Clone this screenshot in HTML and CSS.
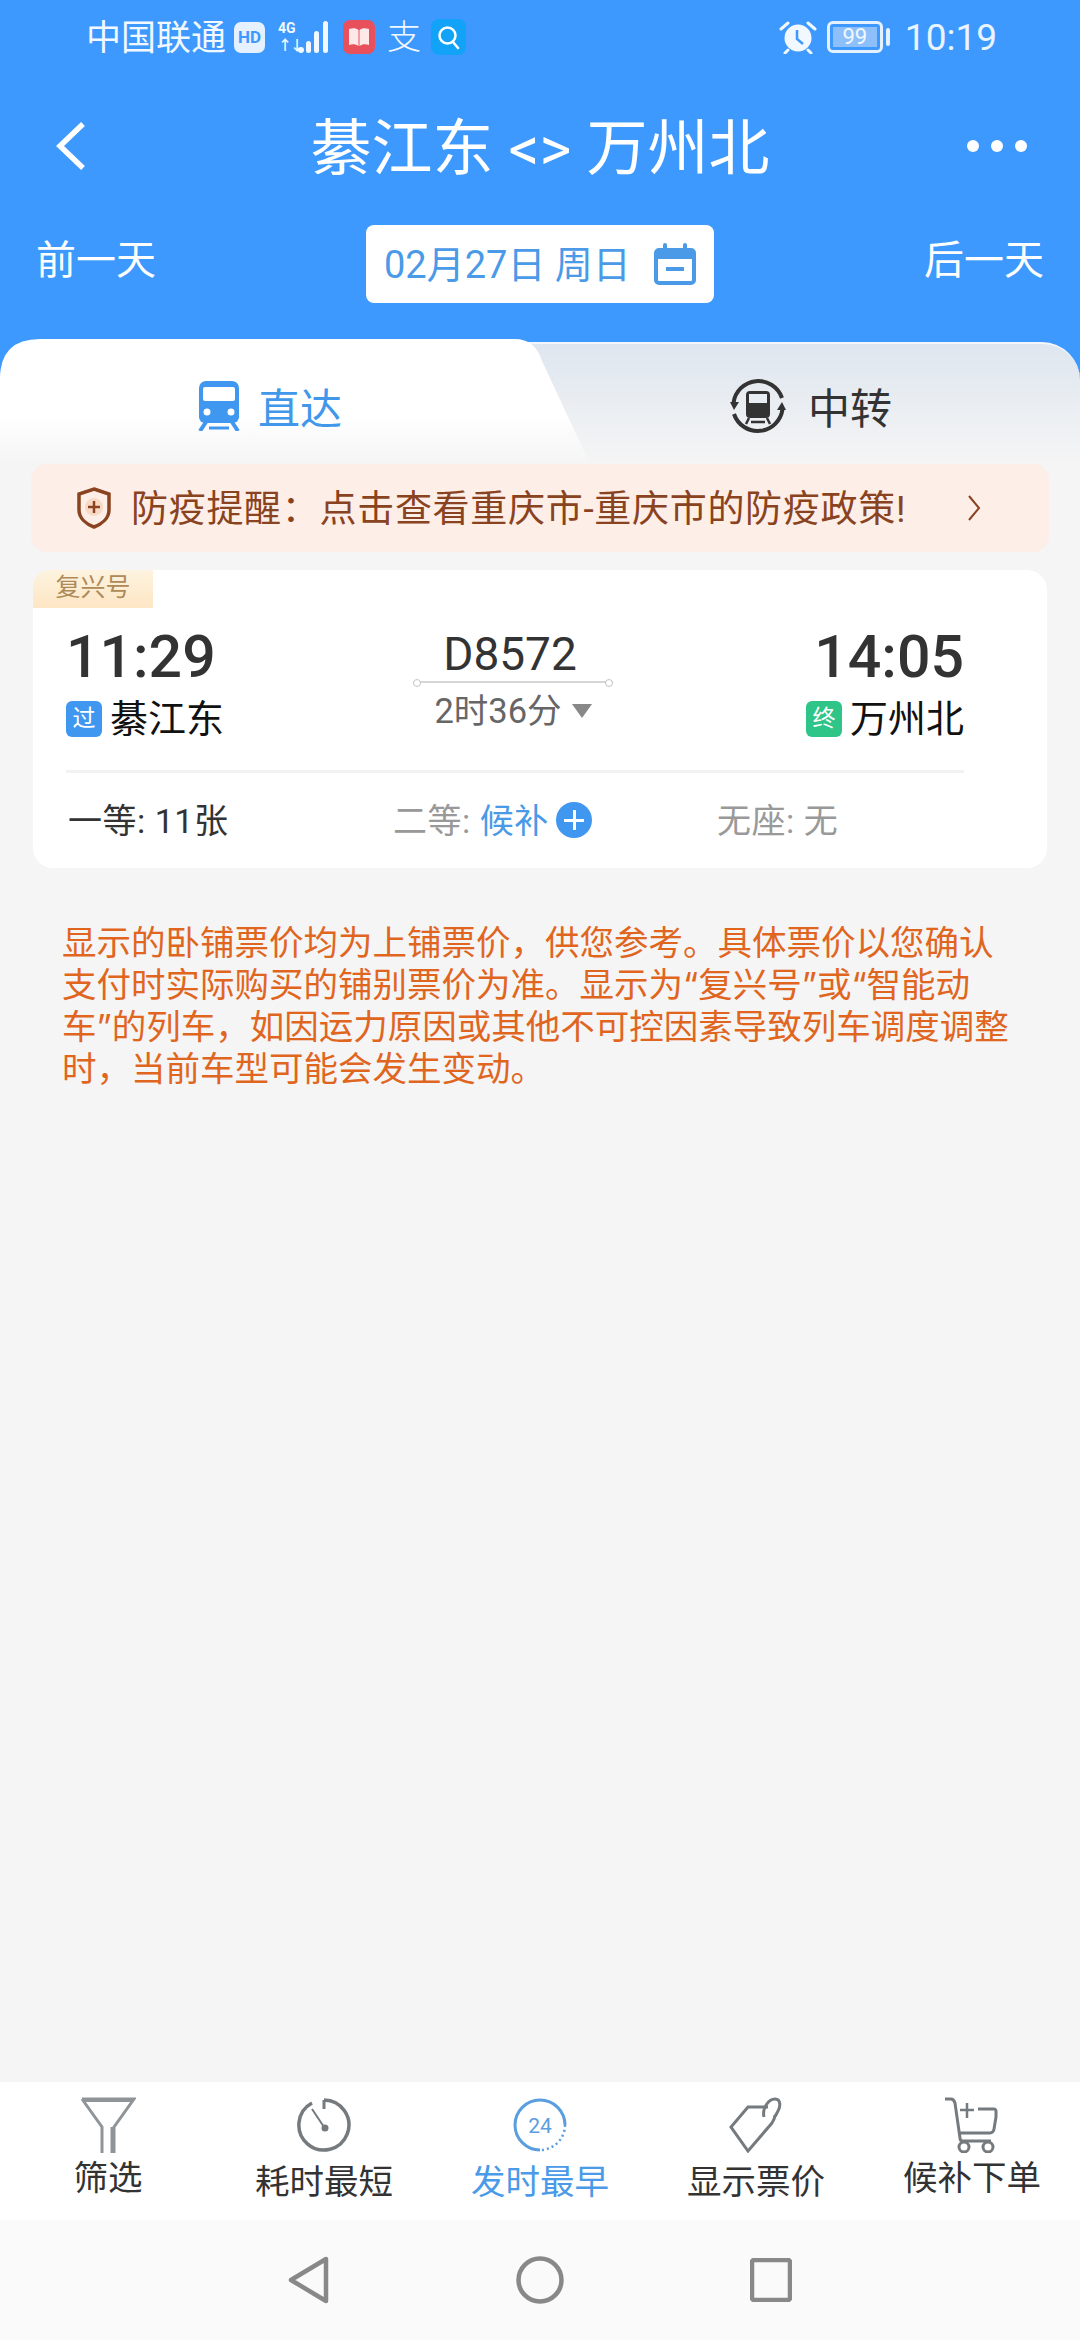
FILE: index.html
```html
<!DOCTYPE html>
<html lang="zh-CN">
<head>
    <meta charset="UTF-8">
    <meta name="viewport" content="width=device-width, initial-scale=1.0">
    <title>綦江东 &lt;&gt; 万州北</title>
    <link rel="stylesheet" href="styles.css">
</head>
<body>
    <div id="page">
        <header class="top">
            <div class="status-bar">
                <div class="status-left">
                    <span class="carrier">中国联通</span>
                    <span class="hd">HD</span>
                    <span class="net">
                        <span class="net-labels"><b>4G</b><b>↑↓</b></span>
                        <svg width="32" height="34" viewBox="0 0 32 34"><g fill="#f2f8ff"><circle cx="3" cy="30" r="3"/><rect x="8" y="21" width="5" height="12" rx="2.500"/><rect x="16" y="11" width="5" height="22" rx="2.500"/><rect x="25" y="1" width="5" height="32" rx="2.500"/></g></svg>
                    </span>
                    <svg class="app-book" width="32" height="34" viewBox="0 0 32 34"><rect width="32" height="34" rx="7" fill="#e8505b"/><path d="M6 9c4-1 7-1 9.500 1v16c-3-2-6-2-9.500-1zM26 9c-4-1-7-1-9.500 1v16c3-2 6-2 9.500-1z" fill="#fde8ea"/></svg>
                    <span class="app-zhi">支</span>
                    <svg class="app-search" width="35" height="36" viewBox="0 0 35 36"><rect width="35" height="36" rx="8" fill="#12a3f8"/><circle cx="16.500" cy="16.500" r="8" fill="none" stroke="#fff" stroke-width="2.500"/><path d="M22 23l5 6" stroke="#fff" stroke-width="2.500" stroke-linecap="round"/></svg>
                </div>
                <div class="status-right">
                    <svg width="38" height="34" viewBox="0 0 38 34"><circle cx="19" cy="18" r="13.500" fill="#f2f8ff"/><path d="M18 10v9l6 5" fill="none" stroke="#3d99fd" stroke-width="2.500"/><path d="M2 9l7-6M36 9l-7-6M9 30l-3 3M29 30l3 3" stroke="#f2f8ff" stroke-width="3" stroke-linecap="round"/></svg>
                    <span class="battery"><span class="battery-level">99</span></span>
                    <span class="battery-tip"></span>
                    <span class="clock">10:19</span>
                </div>
            </div>

            <div class="title-row">
                <svg class="back" width="34" height="50" viewBox="0 0 34 50"><path d="M29 3L6 25l23 22" fill="none" stroke="#fff" stroke-width="5.500"/></svg>
                <h1>綦江东 &lt;&gt; 万州北</h1>
                <div class="more"><i></i><i></i><i></i></div>
            </div>

            <div class="date-row">
                <span class="day-link">前一天</span>
                <div class="date-pill">
                    <span class="date-text">02月27日 周日</span>
                    <svg width="42" height="42" viewBox="0 0 42 42"><rect x="2" y="7" width="38" height="33" rx="3" fill="none" stroke="#4a9ae8" stroke-width="4"/><rect x="2" y="7" width="38" height="9" fill="#4a9ae8"/><path d="M11 2v9M31 2v9" stroke="#4a9ae8" stroke-width="4" stroke-linecap="round"/><rect x="12" y="24" width="18" height="4" fill="#4a9ae8"/></svg>
                </div>
                <span class="day-link">后一天</span>
            </div>

            <div class="tabs">
                <div class="tab-back"></div>
                <div class="tab tab-active">
                    <svg width="42" height="50" viewBox="0 0 42 50"><path d="M8 0h26a7 7 0 0 1 7 7v29a6 6 0 0 1-6 6H7a6 6 0 0 1-6-6V7a7 7 0 0 1 7-7z" fill="#3f97f0"/><rect x="5" y="6" width="32" height="14" rx="2" fill="#fff"/><circle cx="9" cy="31" r="3.500" fill="#fff"/><circle cx="33" cy="31" r="3.500" fill="#fff"/><path d="M8 41L2 50M34 41l6 9" stroke="#3f97f0" stroke-width="4"/><path d="M11 47h20" stroke="#3f97f0" stroke-width="3"/></svg>
                    <span>直达</span>
                </div>
                <div class="tab tab-other">
                    <svg width="56" height="56" viewBox="0 0 56 56"><path d="M3.500 25A25 25 0 0 1 52 20M52.500 31A25 25 0 0 1 4 36" fill="none" stroke="#333" stroke-width="4"/><path d="M0 24l9 0-5 8zM56 32l-9 0 5-8z" fill="#333"/><rect x="16" y="13" width="24" height="27" rx="4" fill="#333"/><rect x="19" y="16" width="18" height="9" fill="#e8edf3"/><path d="M19 40l-3 6M37 40l3 6M21 44h14" stroke="#333" stroke-width="2.500"/></svg>
                    <span>中转</span>
                </div>
            </div>
        </header>

        <main class="content">
            <div class="notice">
                <svg width="34" height="42" viewBox="0 0 34 42"><path d="M17 2l15 5v16c0 8-7 14-15 17C9 37 2 31 2 23V7z" fill="#fdeee7" stroke="#8a4320" stroke-width="3.500"/><circle cx="17" cy="20" r="9" fill="#f8d9c4"/><path d="M17 14v12M11 20h12" stroke="#8a4320" stroke-width="2.500"/></svg>
                <span class="notice-text">防疫提醒：点击查看重庆市-重庆市的防疫政策!</span>
                <svg class="notice-arrow" width="14" height="26" viewBox="0 0 14 26"><path d="M2 1l10 12L2 25" fill="none" stroke="#8a4320" stroke-width="2"/></svg>
            </div>

            <section class="train-card">
                <span class="train-badge">复兴号</span>
                <div class="route">
                    <div class="stop">
                        <div class="time">11:29</div>
                        <div class="station"><span class="tag tag-pass">过</span><span>綦江东</span></div>
                    </div>
                    <div class="middle">
                        <div class="train-no">D8572</div>
                        <div class="track"></div>
                        <div class="duration">2时36分<i class="caret"></i></div>
                    </div>
                    <div class="stop stop-end">
                        <div class="time">14:05</div>
                        <div class="station"><span class="tag tag-end">终</span><span>万州北</span></div>
                    </div>
                </div>
                <div class="seats">
                    <span class="seat seat-first">一等: 11张</span>
                    <span class="seat seat-second">二等: <em>候补</em><i class="plus"></i></span>
                    <span class="seat seat-none">无座: 无</span>
                </div>
            </section>

            <p class="tip">显示的卧铺票价均为上铺票价，供您参考。具体票价以您确认支付时实际购买的铺别票价为准。显示为“复兴号”或“智能动车”的列车，如因运力原因或其他不可控因素导致列车调度调整时，当前车型可能会发生变动。</p>
        </main>

        <nav class="toolbar">
            <div class="tool tool-high">
                <svg width="56" height="56" viewBox="0 0 56 56"><path d="M2 2h52L34 30v26h-2V30M22 56V30L2 2" fill="none" stroke="#8f9498" stroke-width="3"/><path d="M4 3h48" stroke="#8f9498" stroke-width="4"/></svg>
                <span>筛选</span>
            </div>
            <div class="tool">
                <svg width="56" height="56" viewBox="0 0 56 56"><path d="M28 3a25 25 0 1 1-12 3" fill="none" stroke="#757a7e" stroke-width="3.500"/><path d="M16 12l12 18" stroke="#757a7e" stroke-width="2"/><circle cx="29" cy="31" r="3.500" fill="#757a7e"/><path d="M28 3v9" stroke="#757a7e" stroke-width="3"/></svg>
                <span>耗时最短</span>
            </div>
            <div class="tool tool-on">
                <svg width="56" height="56" viewBox="0 0 56 56"><path d="M53 28A25 25 0 1 0 28 53" fill="none" stroke="#5a9ee0" stroke-width="3"/><path d="M53 28a25 25 0 0 1-25 25" fill="none" stroke="#5a9ee0" stroke-width="2.500" stroke-dasharray="2 3"/><text x="28" y="36" text-anchor="middle" font-size="21" font-family="Roboto, sans-serif" fill="#5a9ee0">24</text></svg>
                <span>发时最早</span>
            </div>
            <div class="tool">
                <svg width="56" height="56" viewBox="0 0 56 56"><path d="M40 10H20L3 30l17 24 24-28c2-3 3-5 3-8" fill="none" stroke="#757a7e" stroke-width="3"/><path d="M36 20c-2-8 4-18 11-18 6 0 6 8 2 14-1 2-2 3-2 4" fill="none" stroke="#757a7e" stroke-width="3"/></svg>
                <span>显示票价</span>
            </div>
            <div class="tool tool-high">
                <svg width="56" height="56" viewBox="0 0 56 56"><path d="M1 2h6c2 0 3 1 4 4l5 35c0 2 1 3 3 3h28M14 36h32c2 0 4-2 4-4l2-12V14c0-1-1-2-2-2H34" fill="none" stroke="#757a7e" stroke-width="3"/><path d="M23 6v15M16 13h14" stroke="#757a7e" stroke-width="2.500"/><circle cx="20" cy="50" r="5" fill="none" stroke="#757a7e" stroke-width="3"/><circle cx="44" cy="50" r="5" fill="none" stroke="#757a7e" stroke-width="3"/></svg>
                <span>候补下单</span>
            </div>
        </nav>

        <div class="nav-keys">
            <svg width="42" height="48" viewBox="0 0 42 48"><path d="M38 3v42L3 24z" fill="none" stroke="#888" stroke-width="4.500" stroke-linejoin="round"/></svg>
            <svg width="48" height="48" viewBox="0 0 48 48"><circle cx="24" cy="24" r="21.500" fill="none" stroke="#888" stroke-width="4.500"/></svg>
            <svg width="42" height="44" viewBox="0 0 42 44"><rect x="2" y="2" width="38" height="40" rx="2" fill="none" stroke="#888" stroke-width="4.500"/></svg>
        </div>
    </div>
</body>
</html>
```
FILE: styles.css
```css
* {
    box-sizing: border-box;
}
body {
    margin: 0;
    background-color: #f5f5f5;
    font-family: Roboto, "Noto Sans CJK SC", sans-serif;
    color: #333;
}
#page {
    width: 1080px;
    height: 2340px;
    display: flex;
    flex-direction: column;
}

/* 顶部蓝色区域 */
.top {
    background-color: #3d99fd;
    color: #fff;
    height: 464px;
    flex: none;
}
.status-bar {
    height: 74px;
    padding: 0 83px 0 86px;
    display: flex;
    justify-content: space-between;
    align-items: center;
}
.status-left, .status-right {
    display: flex;
    align-items: center;
}
.carrier {
    font-size: 35px;
    color: #f2f8ff;
    padding-bottom: 5px;
}
.hd {
    margin-left: 8px;
    width: 31px;
    height: 31px;
    border-radius: 7px;
    background-color: #e6f1ff;
    color: #3d99fd;
    font-size: 17px;
    font-weight: 700;
    line-height: 31px;
    text-align: center;
}
.net {
    margin-left: 13px;
    display: flex;
    align-items: flex-end;
}
.net-labels {
    width: 20px;
    display: flex;
    flex-direction: column;
    font-size: 14px;
    line-height: 17px;
    color: #f2f8ff;
    white-space: nowrap;
}
.net-labels b:last-child {
    letter-spacing: -2px;
}
.app-book {
    margin-left: 13px;
}
.app-zhi {
    margin-left: 12px;
    width: 35px;
    font-size: 34px;
    line-height: 40px;
    font-weight: 300;
    color: #f2f8ff;
}
.app-search {
    margin-left: 9px;
}
.battery {
    margin-left: 10px;
    width: 56px;
    height: 32px;
    border: 3px solid #e6f1ff;
    border-radius: 6px;
    padding: 3px;
    display: flex;
}
.battery-level {
    flex: 1;
    background-color: #8dc0fb;
    color: #f2f8ff;
    font-size: 22px;
    line-height: 20px;
    text-align: center;
}
.battery-tip {
    margin-left: 3px;
    width: 4px;
    height: 18px;
    border-radius: 2px;
    background-color: #e6f1ff;
}
.clock {
    margin-left: 15px;
    font-size: 37px;
    color: #eaf4ff;
}
.title-row {
    height: 144px;
    padding: 0 53px 0 54px;
    display: flex;
    justify-content: space-between;
    align-items: center;
    position: relative;
}
.title-row h1 {
    margin: 0;
    padding-bottom: 6px;
    font-size: 61px;
    font-weight: 400;
    position: absolute;
    left: 0;
    right: 0;
    text-align: center;
    pointer-events: none;
}
.more {
    display: flex;
    gap: 12px;
}
.more i {
    width: 12px;
    height: 12px;
    border-radius: 50%;
    background-color: #fff;
}
.date-row {
    height: 84px;
    margin-top: 4px;
    padding: 0 36px;
    display: flex;
    justify-content: space-between;
    align-items: center;
    position: relative;
}
.day-link {
    font-size: 40px;
    padding-bottom: 14px;
}
.date-pill {
    position: absolute;
    left: 366px;
    top: 3px;
    width: 348px;
    height: 78px;
    padding: 0 18px;
    border-radius: 8px;
    background-color: #fff;
    color: #4a9ae8;
    font-size: 38px;
    display: flex;
    justify-content: space-between;
    align-items: center;
}
.date-text {
    padding-bottom: 5px;
}

/* 直达 / 中转 */
.tabs {
    margin-top: 33px;
    height: 125px;
    display: flex;
    position: relative;
}
.tab {
    display: flex;
    align-items: center;
    font-size: 42px;
    padding-top: 8px;
}
.tab-back {
    position: absolute;
    left: 0;
    right: 0;
    top: 3px;
    bottom: 0;
    border-top: 2px solid #f3f6fa;
    border-radius: 38px 38px 0 0;
    background: linear-gradient(#dee6ef, #f5f5f5);
}
.tab-active {
    position: relative;
    width: 590px;
    padding-left: 198px;
    gap: 18px;
    color: #4197ea;
    background: linear-gradient(#fff 60%, #f5f5f5);
    clip-path: path("M0 125V40Q0 0 40 0H515Q535 0 542 22L590 125Z");
}
.tab-other {
    position: relative;
    padding-left: 140px;
    gap: 22px;
    color: #333;
}

.content {
    flex: 1;
}
.notice {
    margin: 0 31px;
    height: 88px;
    padding: 0 68px 0 46px;
    border-radius: 16px;
    background-color: #fdeee7;
    color: #8a4320;
    display: flex;
    align-items: center;
}
.notice-text {
    margin-left: 20px;
    flex: 1;
    font-size: 37px;
    letter-spacing: 0.700px;
    padding-bottom: 5px;
}
.notice-arrow {
    flex: none;
}

/* 车次卡片 */
.train-card {
    margin: 18px 33px 0;
    height: 298px;
    padding: 52px 83px 0 33px;
    border-radius: 20px;
    background-color: #fff;
    position: relative;
}
.train-badge {
    position: absolute;
    left: 0;
    top: 0;
    width: 120px;
    height: 38px;
    border-radius: 16px 0 0 0;
    background: linear-gradient(#fdf3e0, #fde6c4);
    color: #ad8a58;
    font-size: 25px;
    line-height: 36px;
    text-align: center;
}
.route {
    height: 151px;
    border-bottom: 3px solid #f2f2f2;
    display: flex;
    justify-content: space-between;
}
.stop-end {
    text-align: right;
}
.time {
    font-family: Roboto, sans-serif;
    font-size: 59px;
    font-weight: 500;
    line-height: 70px;
}
.station {
    margin-top: 5px;
    font-size: 38px;
    line-height: 44px;
    color: #111;
    display: flex;
    align-items: center;
    gap: 8px;
}
.tag {
    width: 36px;
    height: 36px;
    border-radius: 6px;
    color: #fff;
    font-size: 23px;
    line-height: 36px;
    text-align: center;
}
.tag-pass {
    background-color: #3f97f0;
}
.tag-end {
    background-color: #2fc488;
}
.middle {
    width: 200px;
    margin-left: -4px;
    display: flex;
    flex-direction: column;
    align-items: center;
}
.train-no {
    margin-top: 7px;
    margin-right: 6px;
    font-family: Roboto, sans-serif;
    font-size: 46px;
    line-height: 50px;
}
.track {
    width: 200px;
    height: 2px;
    margin-top: 2px;
    background-color: #d6d6d6;
    position: relative;
}
.track::before, .track::after {
    content: "";
    position: absolute;
    top: -2px;
    width: 6px;
    height: 6px;
    border: 1px solid #c4c4c4;
    border-radius: 50%;
    background-color: #fff;
}
.track::before {
    left: 0;
}
.track::after {
    right: 0;
}
.duration {
    margin-top: 6px;
    font-size: 34.500px;
    line-height: 44px;
    color: #666;
    display: flex;
    align-items: center;
}
.caret {
    margin-left: 10px;
    border-left: 10px solid transparent;
    border-right: 10px solid transparent;
    border-top: 14px solid #888;
}
.seats {
    display: flex;
    height: 92px;
    align-items: center;
    font-size: 34px;
    letter-spacing: 0.500px;
}
.seat {
    display: flex;
    align-items: center;
    white-space: pre;
    padding-bottom: 2px;
}
.seat-first {
    width: 327px;
    color: #333;
    padding-left: 2px;
}
.seat-second {
    width: 324px;
    color: #999;
}
.seat-second em {
    font-style: normal;
    color: #4a9ae8;
}
.seat-none {
    color: #999;
}
.plus {
    margin: 4px 0 0 7px;
    width: 36px;
    height: 36px;
    border-radius: 50%;
    background-color: #3f97f0;
    position: relative;
}
.plus::before, .plus::after {
    content: "";
    position: absolute;
    background-color: #fff;
}
.plus::before {
    left: 8px;
    right: 8px;
    top: 17px;
    height: 3px;
}
.plus::after {
    top: 8px;
    bottom: 8px;
    left: 17px;
    width: 3px;
}
.tip {
    margin: 54px 65px 0 62px;
    font-family: Inter, "Noto Sans CJK SC", sans-serif;
    font-size: 34.500px;
    line-height: 42px;
    color: #e0661f;
}

/* 底部工具栏 */
.toolbar {
    flex: none;
    height: 138px;
    background-color: #fff;
    display: flex;
}
.tool {
    width: 216px;
    padding-top: 15px;
    display: flex;
    flex-direction: column;
    align-items: center;
    font-size: 34.500px;
    line-height: 50px;
    color: #333;
}
.tool svg {
    flex: none;
}
.tool span {
    margin-top: 4px;
}
.tool-high span {
    margin-top: 0;
}
.tool-on {
    color: #4a9ae8;
}
.nav-keys {
    flex: none;
    height: 120px;
    padding: 0 288px 0 288px;
    background-color: #fafafa;
    display: flex;
    justify-content: space-between;
    align-items: center;
}
```
